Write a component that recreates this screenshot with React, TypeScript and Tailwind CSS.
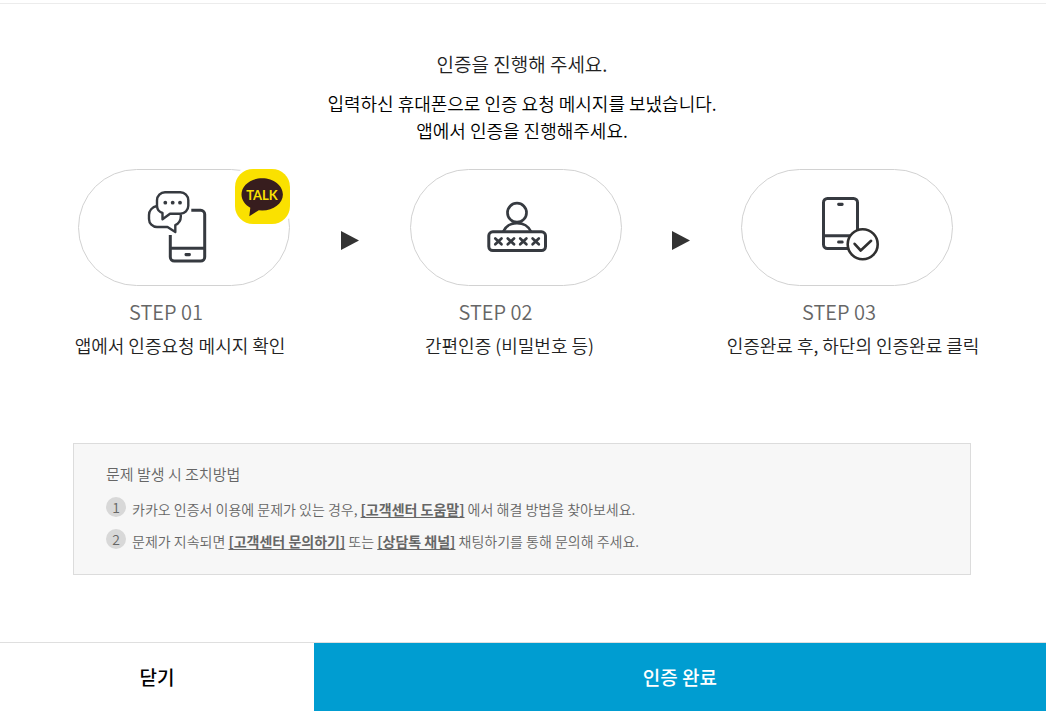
import React from 'react';

interface Step {
  label: string;
  caption: string;
  captionClass: string;
  icon: React.ReactNode;
  talk?: boolean;
}

const iconProps = {
  viewBox: '0 0 210 115',
  className: 'block w-full',
  fill: 'none',
  stroke: '#363a40',
  strokeWidth: 3,
  strokeLinejoin: 'round' as const,
  'aria-hidden': true,
};

const MessageIcon = () => (
  <svg {...iconProps}>
    <path d="M112.3 40.3h9.4a4 4 0 0 1 4 4V87a4 4 0 0 1-4 4H95.3a4 4 0 0 1-4-4V65" />
    <path d="M91.3 78.3h34.4" />
    <rect x="105.5" y="83" width="6.4" height="3.2" rx="1.4" fill="#363a40" stroke="none" />
    <path
      d="M78 36c-4.800 1-8 4.500-8 9v4a8 8 0 0 0 8 8h10.500l7.800 5v-7c3.500-1.500 5.500-4.500 5.500-8.500v-2"
      strokeWidth="2.4"
    />
    <path
      d="M86 22.300h15.300a8 8 0 0 1 8 8v5.400a8 8 0 0 1-8 8H91l-7.500 5.500v-6.200a8 8 0 0 1-5.500-7.300v-5.400a8 8 0 0 1 8-8z"
      fill="white"
      strokeWidth="2.4"
    />
    <g fill="#363a40" stroke="none">
      <circle cx="86.3" cy="32.7" r="1.9" />
      <circle cx="93.7" cy="32.7" r="1.9" />
      <circle cx="101" cy="32.7" r="1.9" />
    </g>
  </svg>
);

const PasswordIcon = () => (
  <svg {...iconProps}>
    <circle cx="106" cy="42.7" r="9.5" strokeWidth="2.7" />
    <path d="M92.3 61.500c2-5 7.500-8.300 13.700-8.300s11.700 3.300 13.900 8.300" strokeWidth="2.7" />
    <rect x="77.8" y="61.8" width="56.7" height="18.7" rx="4" />
    <g strokeWidth="2.7" strokeLinecap="round">
      <path d="M84.3 68.5l6.2 5.8M84.3 74.3l6.2-5.8" />
      <path d="M96.8 68.5l6.2 5.8M96.8 74.3l6.2-5.8" />
      <path d="M109.2 68.5l6.2 5.8M109.2 74.3l6.2-5.8" />
      <path d="M121.6 68.5l6.2 5.8M121.6 74.3l6.2-5.8" />
    </g>
  </svg>
);

const CompleteIcon = () => (
  <svg {...iconProps}>
    <rect x="81.5" y="28.5" width="34" height="50" rx="4" />
    <path d="M81.5 65.7h34" />
    <rect x="95.2" y="32.7" width="6.4" height="3.2" rx="1.4" fill="#363a40" stroke="none" />
    <rect x="95.2" y="70.4" width="6.4" height="3.2" rx="1.4" fill="#363a40" stroke="none" />
    <circle cx="120.7" cy="74.3" r="15" fill="white" stroke="#303030" strokeWidth="2.6" />
    <path d="M112.6 73.8l6.100 6.700 10.400-9.700" stroke="#303030" strokeWidth="2.6" strokeLinecap="round" />
  </svg>
);

const TalkBadge = () => (
  <span className="absolute -top-px -right-px size-[55px] rounded-[18px] bg-[#fae100] ring-3 ring-white">
    <svg viewBox="0 0 55 55" className="block size-full" aria-hidden="true">
      <path
        d="M27.2 9.200C15.700 9.200 6.500 16.500 6.500 25.500c0 5.600 3.500 10.300 8.800 13.200l-1 8.600 9.500-6 3.400.2c11.400 0 20.700-7.100 20.700-16S38.600 9.200 27.200 9.200z"
        fill="#371d1e"
      />
      <text x="27" y="31" textAnchor="middle" fill="#fae100" className="font-['Lato',sans-serif] text-[13px] font-bold">
        TALK
      </text>
    </svg>
  </span>
);

const Arrow = () => (
  <li aria-hidden="true" className="mt-[62px]">
    <svg viewBox="0 0 18 19" className="block h-[19px] w-[18px]">
      <path d="M0 0l18 9.5L0 19z" fill="#333" />
    </svg>
  </li>
);

const steps: Step[] = [
  { label: 'STEP 01', caption: '앱에서 인증요청 메시지 확인', captionClass: 'pr-2', icon: <MessageIcon />, talk: true },
  { label: 'STEP 02', caption: '간편인증 (비밀번호 등)', captionClass: 'pr-3', icon: <PasswordIcon /> },
  { label: 'STEP 03', caption: '인증완료 후, 하단의 인증완료 클릭', captionClass: 'pl-3', icon: <CompleteIcon /> },
];

const HelpLink = ({ children }: { children: React.ReactNode }) => (
  <a href="#" className="font-bold underline underline-offset-2">{children}</a>
);

const HelpItem = ({ no, children }: { no: number; children: React.ReactNode }) => (
  <li className="flex items-start gap-1.5 text-sm leading-8">
    <span className="mt-1 flex size-5 shrink-0 items-center justify-center rounded-full bg-[#d8d8d8] leading-5">{no}</span>
    <p>{children}</p>
  </li>
);

const App: React.FC = () => {
  return (
    <div className="bg-white pt-[3px] font-['Noto_Sans_CJK_KR',sans-serif] font-[350] text-black">
      <main className="border-t border-[#ececec] pt-[46px] pr-[75px] pb-[67px] pl-[73px]">
        <div className="text-center">
          <h1 className="text-[19px] leading-7 text-[#222]">인증을 진행해 주세요.</h1>
          <p className="mt-3 text-lg leading-[27px]">
            입력하신 휴대폰으로 인증 요청 메시지를 보냈습니다.
            <br />
            앱에서 인증을 진행해주세요.
          </p>
        </div>

        <ol className="mt-[25px] flex items-start justify-between pr-[18px] pl-[5px]">
          {steps.map((step, i) => (
            <React.Fragment key={step.label}>
              {i > 0 && <Arrow />}
              <li className="w-[212px]">
                <div className="relative rounded-full border border-[#d2d2d2]">
                  {step.icon}
                  {step.talk && <TalkBadge />}
                </div>
                <div className={`mt-3 flex flex-col items-center gap-1.5 whitespace-nowrap ${step.captionClass}`}>
                  <strong className="pr-7 text-xl leading-7 font-[350] text-[#666]">{step.label}</strong>
                  <span className="text-lg leading-[27px] text-[#222]">{step.caption}</span>
                </div>
              </li>
            </React.Fragment>
          ))}
        </ol>

        <section className="mt-[84px] border border-[#dcdcdc] bg-[#f7f7f7] px-8 pt-[18px] pb-[17px] text-[#666]">
          <h2 className="text-[15px] leading-6">문제 발생 시 조치방법</h2>
          <ol className="mt-[7px]">
            <HelpItem no={1}>
              카카오 인증서 이용에 문제가 있는 경우, <HelpLink>[고객센터 도움말]</HelpLink> 에서 해결 방법을 찾아보세요.
            </HelpItem>
            <HelpItem no={2}>
              문제가 지속되면 <HelpLink>[고객센터 문의하기]</HelpLink> 또는 <HelpLink>[상담톡 채널]</HelpLink> 채팅하기를 통해 문의해 주세요.
            </HelpItem>
          </ol>
        </section>
      </main>

      <footer className="flex border-t border-[#dfdfdf] text-[19px] font-medium">
        <button type="button" className="h-[68px] w-[30%] bg-white">닫기</button>
        <button type="button" className="h-[68px] flex-1 bg-[#009dd1] text-white">인증 완료</button>
      </footer>
    </div>
  );
};

export default App;
